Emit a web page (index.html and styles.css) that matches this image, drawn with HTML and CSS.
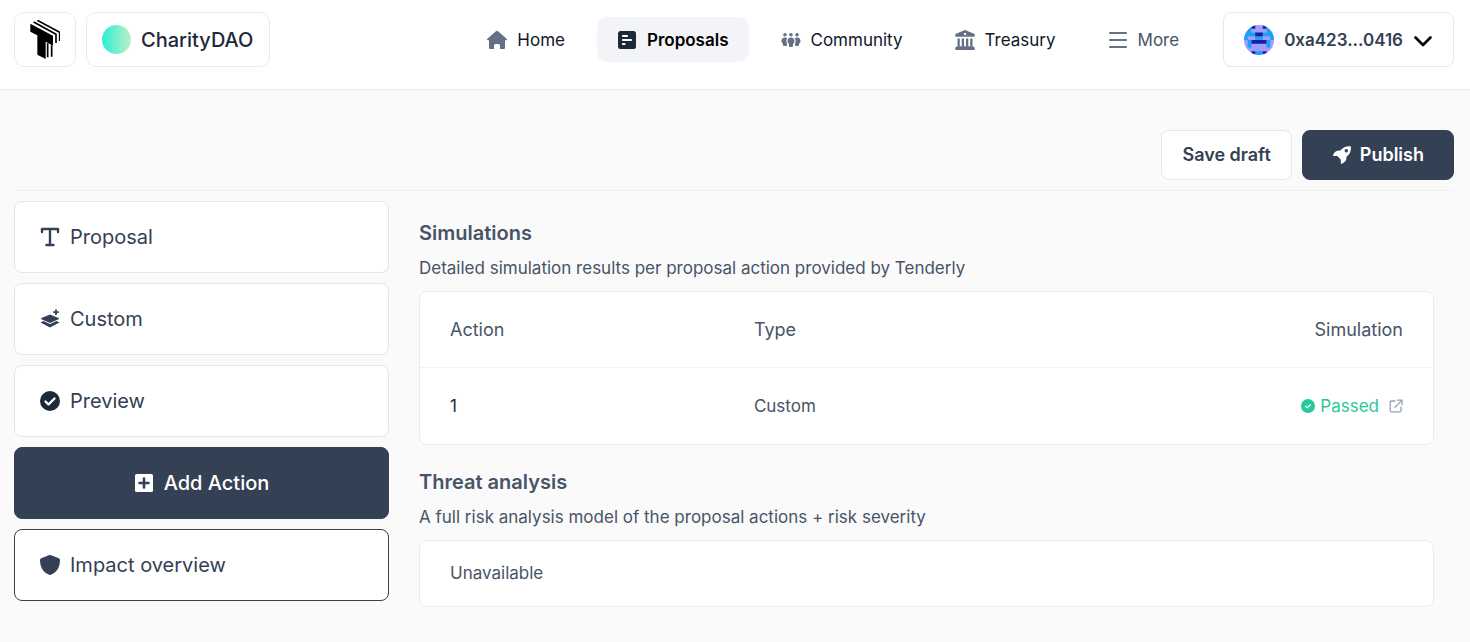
FILE: index.html
```html
<!DOCTYPE html>
<html lang="en">
<head>
<meta charset="utf-8">
<meta name="viewport" content="width=device-width, initial-scale=1">
<title>CharityDAO – Impact overview</title>
<link rel="stylesheet" href="styles.css">
</head>
<body>
<header class="topbar">
  <div class="brand">
    <a class="logo-box" href="#" aria-label="Home page">
      <svg width="30" height="39" viewBox="90 60 90 117"><path d="M91 71l68 36v30l-22-12v52l-25-13v-58l-21-11z"/><path d="M101 66l67 37v26M112 61l67 36v26M143 130v42M155 136v34" fill="none" stroke="#000" stroke-width="5"/></svg>
    </a>
    <a class="dao" href="#"><span class="dao-dot"></span>CharityDAO</a>
  </div>
  <nav class="nav">
    <a class="nav-item" href="#">
      <svg class="icon" viewBox="0 0 20 20"><path d="M10 .8Q10.600.8 11.100 1.200L19.600 8.800q.8.900-.3 1.400H18V18q0 1-1 1h-4v-3.500q0-1.500-1.500-1.500h-3Q7 14 7 15.500V19H3q-1 0-1-1v-7.800H.7Q-.4 9.700.4 8.800L8.900 1.200Q9.400.8 10 .8z"/></svg>
      <span>Home</span></a>
    <a class="nav-item nav-active" href="#" aria-current="page">
      <svg class="icon" viewBox="0 0 20 20"><rect x="1" y="1" width="18" height="18" rx="2.500"/><path d="M6 6h4M6 10h8M6 14h1.500" stroke="#fff" stroke-width="2.200" stroke-linecap="round"/></svg>
      <span>Proposals</span></a>
    <a class="nav-item" href="#">
      <svg class="icon" viewBox="0 0 20 20"><circle cx="4" cy="4.800" r="1.800"/><circle cx="10" cy="4.800" r="1.800"/><circle cx="16" cy="4.800" r="1.800"/><path d="M4 7.500c.9 0 1.700.2 2.300.7C5.200 9.500 5 11.500 6 13.400V15q0 1-1 1H3q-1 0-1-1v-1.200C-.7 12 .2 7.500 4 7.500zM16 7.500c-.9 0-1.700.2-2.300.7 1.100 1.300 1.300 3.300.3 5.200V15q0 1 1 1h2q1 0 1-1v-1.200c2.700-1.800 1.800-6.300-2-6.300z"/><path d="M10 7.500c3.700 0 4.500 4.700 2 6.500v2q0 1-1 1H9q-1 0-1-1v-2c-2.500-1.800-1.700-6.500 2-6.500z"/></svg>
      <span>Community</span></a>
    <a class="nav-item" href="#">
      <svg class="icon" viewBox="0 0 20 20"><path fill-rule="evenodd" d="M10 0l9 3.700q.8.400.8 1.200V6q0 .8-.8.800H1Q.2 6.800.2 6V4.900q0-.8.8-1.200zM10 2.800a1.200 1.200 0 1 0 .01 0z"/><path d="M2.500 8.500h2.300v8H2.500zM6.700 8.500H9v8H6.700zM11 8.500h2.300v8H11zM15.200 8.500h2.300v8h-2.300z"/><path d="M2 16.300h16q1.900.5 1.900 2.700 0 1-1 1H1.100q-1 0-1-1Q.1 16.800 2 16.300z"/></svg>
      <span>Treasury</span></a>
    <button class="nav-item nav-more" type="button">
      <svg class="icon" viewBox="0 0 20 20"><path d="M2 3h16M2 10h16M2 17h16" stroke="#667085" stroke-width="2" stroke-linecap="round"/></svg>
      <span>More</span></button>
    <button class="wallet" type="button">
      <svg class="avatar" viewBox="0 0 8 8"><path fill="#9f9eff" d="M0 0h8v8H0z"/><path fill="#1aa0f5" d="M0 0h2v3H0zM6 0h2v3H6zM0 2h8v1H0zM0 3h1v1H0zM3 3h2v1H3zM7 3h1v1H7zM1 4h1v2H1zM6 4h1v2H6zM3 7h2v1H3z"/><path fill="#9f9eff" d="M2 1h4v1H2z"/><path fill="#1c1ea8" d="M2 0h1v1H2zM5 0h1v1H5zM3 2h2v1H3zM2 4h4v1H2zM2 7h1v1H2zM5 7h1v1H5z"/></svg>
      <span>0xa423...0416</span>
      <svg class="icon" viewBox="0 0 20 20"><path d="M2.500 7.500l7.500 7.500 7.500-7.500" fill="none" stroke="#000" stroke-width="2.600" stroke-linecap="round" stroke-linejoin="round"/></svg>
    </button>
  </nav>
</header>
<main class="page">
  <div class="actions">
    <button class="btn" type="button">Save draft</button>
    <button class="btn btn-dark" type="button">
      <svg class="icon" viewBox="0 0 20 20"><path fill-rule="evenodd" d="M18.300 1.200q.6.100.6.700c.3 4-.9 7.200-4.400 9.800.3 3-1 5.200-4.500 7-.8.400-1.200 0-1.200-.8v-3.200l-3.400-3.600H2c-1 0-1.200-.6-.8-1.400C2.600 6.800 5 5.300 8.300 5.600 11 2.200 14.500.8 18.300 1.200zM14.300 4a1.700 1.700 0 1 0 .01 0z"/></svg>
      <span>Publish</span></button>
  </div>
  <div class="columns">
    <aside class="side">
      <button class="step" type="button">
        <svg class="icon" viewBox="0 0 20 20"><path d="M2 5V2h16v3M10 2v16M6.500 18h7" fill="none" stroke="#344054" stroke-width="2.400" stroke-linecap="round" stroke-linejoin="round"/></svg>Proposal</button>
      <button class="step" type="button">
        <svg class="icon" viewBox="0 0 20 20"><path d="M10 5.500l8.500 3.600q1 .6 0 1.100L10 14l-8.500-3.800q-1-.5 0-1.100z"/><path d="M.5 13.500l3-1.400L10 15l6.500-2.900 3 1.400L10 18.500z"/><path d="M16 .5v5.500M13.200 3.200h5.600" fill="none" stroke="#344054" stroke-width="1.800"/></svg>Custom</button>
      <button class="step" type="button">
        <svg class="icon icon-deep" viewBox="0 0 20 20"><circle cx="10" cy="10" r="10"/><path d="M5.500 10.500l3 3 6-6" fill="none" stroke="#fff" stroke-width="2.400" stroke-linecap="round" stroke-linejoin="round"/></svg>Preview</button>
      <button class="step step-add" type="button">
        <svg class="icon" viewBox="0 0 20 20"><rect x="1" y="1" width="18" height="18" rx="1.500"/><path d="M10 5.500v9M5.500 10h9" stroke="#344054" stroke-width="2.600" stroke-linecap="round"/></svg>Add Action</button>
      <button class="step step-current" type="button">
        <svg class="icon" viewBox="0 0 20 20"><path d="M10 0q.6 0 1.200.3l7.600 2.900q1.200.5 1.200 2c0 6.300-3 12-8.600 14.400Q10 20.200 8.600 19.600C3 17.200 0 11.500 0 5.200q0-1.500 1.200-2L8.800.3Q9.400 0 10 0z"/></svg>Impact overview</button>
    </aside>
    <div class="content">
      <section class="block">
        <h2>Simulations</h2>
        <p>Detailed simulation results per proposal action provided by Tenderly</p>
        <div class="card">
          <table class="results">
            <thead><tr><th scope="col">Action</th><th scope="col">Type</th><th scope="col" class="end">Simulation</th></tr></thead>
            <tbody><tr><td class="num">1</td><td>Custom</td><td class="end">
              <div class="status">
                <svg class="check" viewBox="0 0 14 14"><circle cx="7" cy="7" r="7" fill="#28c89b"/><path d="M4.500 7.200l1.800 1.600 3.200-3.200" fill="none" stroke="#fff" stroke-width="1.300" stroke-linecap="round" stroke-linejoin="round"/></svg>
                <span>Passed</span>
                <a class="open" href="#" aria-label="Open simulation"><svg class="check" viewBox="0 0 14 14"><path d="M6 2H2.500Q1.200 2 1.200 3.300v8.200q0 1.300 1.300 1.300h8.200q1.300 0 1.300-1.300V8M8.500 1.200H13v4.500M12.800 1.400L6 8.200" fill="none" stroke="#98a2b3" stroke-width="1.300" stroke-linecap="round"/></svg></a>
              </div></td></tr></tbody>
          </table>
        </div>
      </section>
      <section class="block">
        <h2>Threat analysis</h2>
        <p>A full risk analysis model of the proposal actions + risk severity</p>
        <div class="card card-text">Unavailable</div>
      </section>
    </div>
  </div>
</main>
</body>
</html>
```
FILE: styles.css
```css
* { box-sizing: border-box; }
body {
  margin: 0;
  background: #fafafa;
  color: #344054;
  font: 400 17px/24px Inter, "Open Sans", sans-serif;
}
button { font: inherit; color: inherit; cursor: pointer; }
a { color: inherit; text-decoration: none; }
.icon { width: 20px; height: 20px; flex: none; fill: currentColor; }

.topbar {
  display: flex;
  justify-content: space-between;
  align-items: flex-start;
  padding: 12px 16px 22px 14px;
  background: #fff;
  border-bottom: 1px solid #eaeaec;
}
.brand { display: flex; gap: 10px; }
.logo-box, .dao {
  display: flex;
  align-items: center;
  height: 55px;
  border: 1px solid #ebebed;
  border-radius: 10px;
}
.logo-box { width: 62px; justify-content: center; }
.dao {
  gap: 10px;
  padding: 0 16px 0 15px;
  color: #1d2939;
  font-size: 20px;
  font-weight: 500;
}
.dao-dot {
  width: 29px;
  height: 29px;
  border-radius: 50%;
  background: linear-gradient(90deg, #2af0d4, #bdeec8);
}

.nav { display: flex; align-items: center; gap: 12px; }
.nav-item {
  display: flex;
  align-items: center;
  gap: 10px;
  height: 45px;
  padding: 0 20px;
  border: 0;
  border-radius: 10px;
  background: none;
}
.nav-item span { color: #101828; }
.nav-item .icon { color: #667085; }
.nav-more span { color: #475467; }
.nav-active { background: #f2f4f7; font-weight: 600; }
.nav-active span { color: #000; }
.nav-active .icon { color: #1d2939; }
.wallet {
  display: flex;
  align-items: center;
  gap: 10px;
  height: 55px;
  margin-left: 12px;
  padding: 0 20px;
  border: 1px solid #e4e7ec;
  border-radius: 8px;
  background: #fff;
  font-weight: 600;
}
.avatar { width: 30px; height: 30px; border-radius: 50%; }

.page { padding: 40px 16px 35px 14px; }
.actions {
  display: flex;
  justify-content: flex-end;
  gap: 10px;
  padding-bottom: 10px;
  border-bottom: 1px solid #f0f1f3;
}
.btn {
  display: flex;
  align-items: center;
  justify-content: center;
  gap: 8px;
  height: 50px;
  padding: 0 20px;
  border: 1px solid #e4e7ec;
  border-radius: 8px;
  background: #fff;
  font-size: 18px;
  font-weight: 600;
}
.btn-dark { padding: 0 29px; background: #344054; border-color: #344054; color: #fff; }

.columns { display: flex; gap: 30px; padding: 10px 20px 0 0; }
.side { display: flex; flex-direction: column; gap: 10px; flex: 0 0 375px; }
.step {
  display: flex;
  align-items: center;
  gap: 10px;
  height: 72px;
  padding: 0 25px;
  border: 1px solid #e4e5e8;
  border-radius: 8px;
  background: #fff;
  font-size: 20px;
}
.icon-deep { color: #1d2939; }
.step-add { justify-content: center; background: #344054; border-color: #344054; color: #fff; font-weight: 500; }
.step-current { border-color: #344054; }

.content { flex: 1; min-width: 0; padding-top: 20px; }
.block { margin-bottom: 25px; }
.block:last-child { margin-bottom: 0; }
.block h2 { margin: 0 0 11px; font-size: 20px; line-height: 24px; font-weight: 600; color: #475467; }
.block p { margin: 0 0 11px; color: #475467; }
.card {
  border: 1px solid #ebecef;
  border-radius: 8px;
  background: #fff;
  color: #475467;
}
.card-text { padding: 20px 30px; line-height: 25px; }
.results { width: 100%; border-collapse: separate; border-spacing: 0; table-layout: fixed; }
.results th, .results td { height: 76px; padding: 0 30px; text-align: left; font-weight: 400; }
.results th { border-bottom: 1px solid #f2f3f5; font-size: 18px; }
.results th:first-child, .results th:nth-child(2) { width: 30%; }
.results .end { text-align: right; }
.results .num { color: #1d2939; }
.status { display: flex; justify-content: flex-end; align-items: center; gap: 5px; color: #28c89b; }
.open { display: flex; margin-left: 5px; }
.check { width: 14px; height: 14px; }
```
